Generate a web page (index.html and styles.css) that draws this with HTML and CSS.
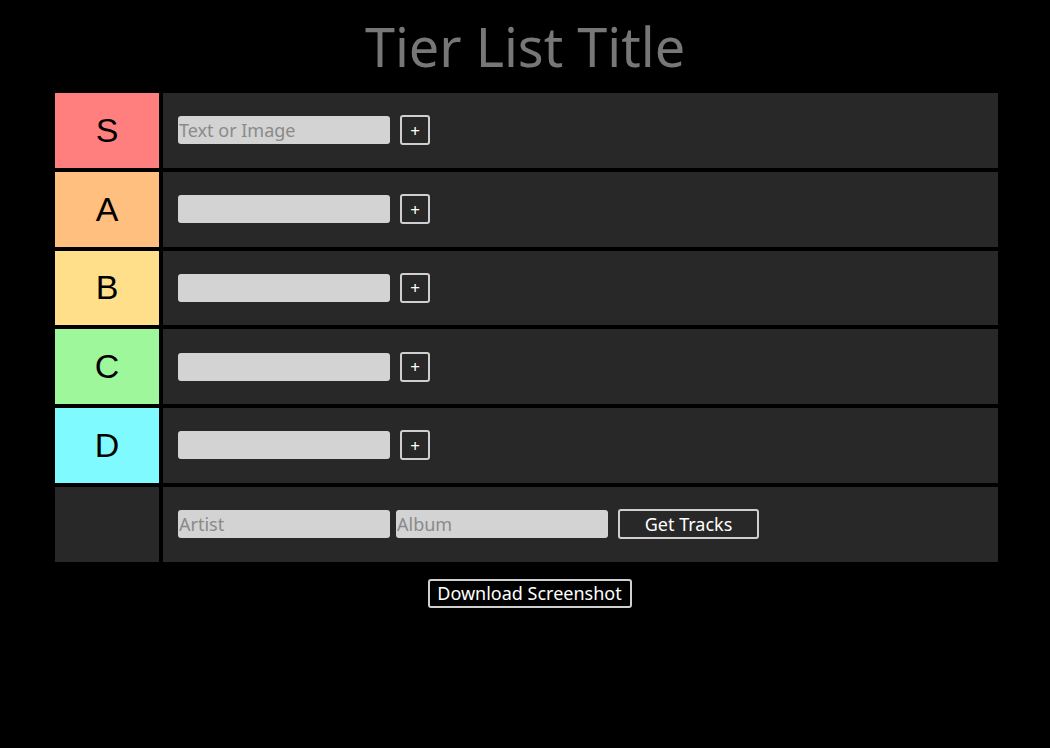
FILE: index.html
```html
<!DOCTYPE html>
<html>
<head>
<meta charset="utf-8">
<link rel="stylesheet" href="styles.css">
</head>
<body>
<h1 class="title">Tier List Title</h1>
<div class="tiers">
  <div class="row">
    <div class="label tier-s">S</div>
    <div class="content">
      <input class="field" type="text" placeholder="Text or Image">
      <button class="add">+</button>
    </div>
  </div>
  <div class="row">
    <div class="label tier-a">A</div>
    <div class="content">
      <input class="field" type="text">
      <button class="add">+</button>
    </div>
  </div>
  <div class="row">
    <div class="label tier-b">B</div>
    <div class="content">
      <input class="field" type="text">
      <button class="add">+</button>
    </div>
  </div>
  <div class="row">
    <div class="label tier-c">C</div>
    <div class="content">
      <input class="field" type="text">
      <button class="add">+</button>
    </div>
  </div>
  <div class="row">
    <div class="label tier-d">D</div>
    <div class="content">
      <input class="field" type="text">
      <button class="add">+</button>
    </div>
  </div>
  <div class="row">
    <div class="label tier-empty"></div>
    <div class="content">
      <input class="field" type="text" placeholder="Artist">
      <input class="field album" type="text" placeholder="Album">
      <button class="btn tracks">Get Tracks</button>
    </div>
  </div>
</div>
<div class="footer">
  <button class="btn download">Download Screenshot</button>
</div>
</body>
</html>
```

FILE: styles.css
```css
html, body {
  margin: 0;
  padding: 0;
  background: #000;
  font-family: "Noto Sans", "Open Sans", sans-serif;
}
body {
  height: 748px;
}
.title {
  margin: 0;
  padding-top: 13px;
  height: 93px;
  box-sizing: border-box;
  text-align: center;
  font-weight: 400;
  font-size: 54px;
  line-height: 66px;
  color: #777;
}
.tiers {
  width: 943px;
  margin: 0 0 0 55px;
  display: flex;
  flex-direction: column;
  gap: 4px;
}
.row {
  display: flex;
  gap: 4px;
  height: 74.75px;
}
.label {
  width: 104px;
  flex: none;
  display: flex;
  align-items: center;
  justify-content: center;
  font-family: "Liberation Sans", Arial, sans-serif;
  font-size: 34px;
  color: #000;
}
.tier-s { background: #ff7f7f; }
.tier-a { background: #ffbf7f; }
.tier-b { background: #ffdf8a; }
.tier-c { background: #9ff79b; }
.tier-d { background: #7ffbff; }
.tier-empty { background: #282828; }
.content {
  flex: 1;
  background: #282828;
  display: flex;
  align-items: center;
  padding-left: 15px;
}
.field {
  width: 212px;
  height: 28px;
  box-sizing: border-box;
  border: none;
  border-radius: 3px;
  background: #d3d3d3;
  padding: 0 0 0 1px;
  font-family: "Noto Sans", "Open Sans", sans-serif;
  font-size: 18px;
  color: #000;
  outline: none;
}
.field::placeholder {
  color: #8a8a8a;
}
.add {
  margin-left: 10px;
  width: 30px;
  height: 30px;
  box-sizing: border-box;
  border: 2px solid #cfcfcf;
  border-radius: 3px;
  background: transparent;
  color: #fff;
  font-family: "Noto Sans", sans-serif;
  font-size: 17px;
  padding: 0;
  line-height: 1;
}
.album {
  margin-left: 6px;
}
.btn {
  height: 30px;
  box-sizing: border-box;
  border: 2px solid #cfcfcf;
  border-radius: 3px;
  background: transparent;
  color: #fff;
  font-family: "Noto Sans", sans-serif;
  font-size: 18px;
  padding: 0;
  line-height: 1;
}
.tracks {
  margin-left: 10px;
  width: 141px;
}
.footer {
  display: flex;
  justify-content: center;
  padding-top: 17px;
}
.download {
  width: 204px;
  height: 29px;
  margin-left: 9px;
}
```
